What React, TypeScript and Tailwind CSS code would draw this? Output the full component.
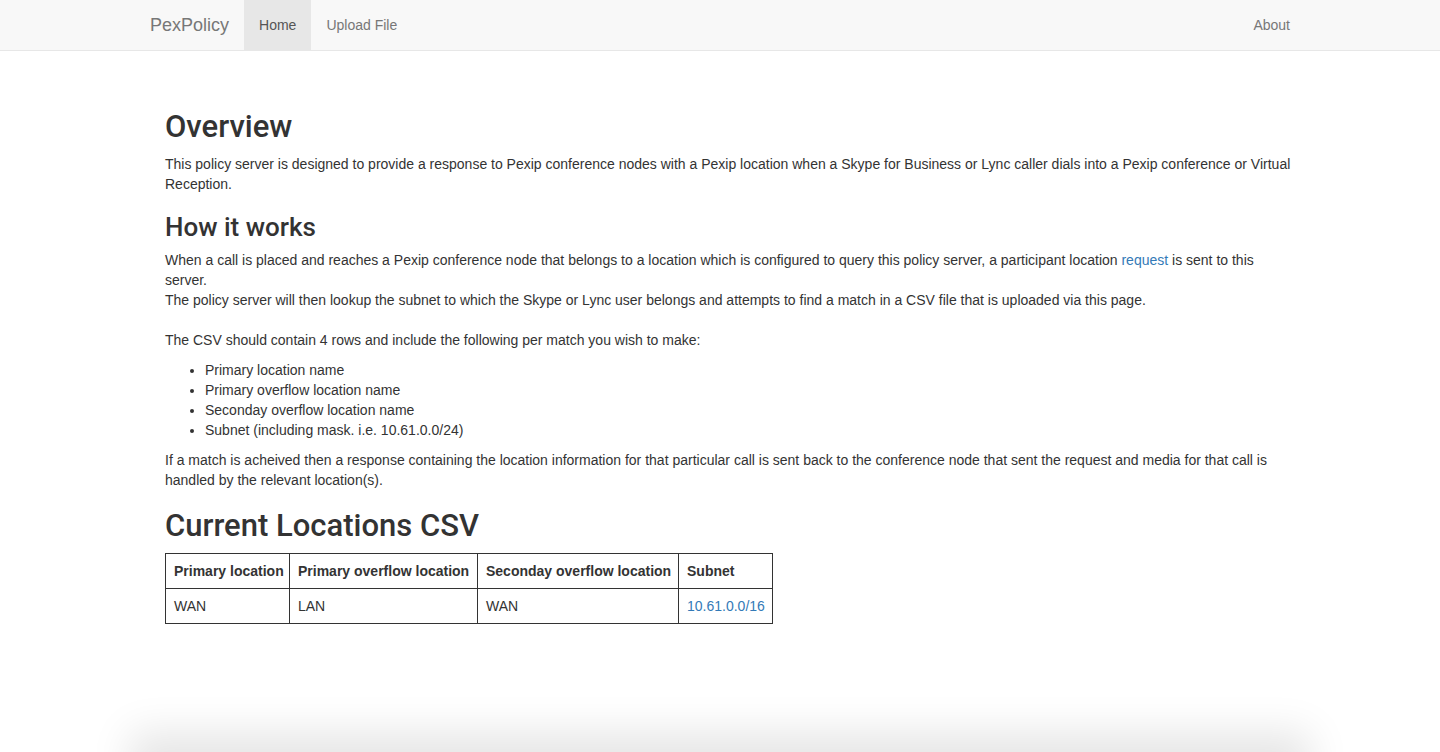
import React from "react";

const rows = [
  { primary: "WAN", overflow: "LAN", secondary: "WAN", subnet: "10.61.0.0/16" },
];

export default function App() {
  return (
    <div className="h-[752px] overflow-hidden flex flex-col bg-white text-[#333] font-['Liberation_Sans',Arial,sans-serif]">
      {/* Navbar */}
      <nav className="h-[51px] shrink-0 bg-[#f8f8f8] border-b border-[#e7e7e7]">
        <div className="w-[1170px] mx-auto px-[15px] flex h-[50px]">
          <a className="-ml-[15px] px-[15px] flex items-center text-[18px] text-[#777]">PexPolicy</a>
          <a className="px-[15px] flex items-center text-[14px] text-[#555] bg-[#e7e7e7]">Home</a>
          <a className="px-[15px] flex items-center text-[14px] text-[#777]">Upload File</a>
          <a className="ml-auto -mr-[15px] px-[15px] flex items-center text-[14px] text-[#777]">About</a>
        </div>
      </nav>

      {/* Content */}
      <main className="flex-1 w-[1130px] ml-[165px] text-[14px] leading-[20px]">
        <h1 className="mt-[56px] mb-[7px] text-[31px] leading-[40px] font-medium font-['Roboto',sans-serif]">Overview</h1>
        <p>
          This policy server is designed to provide a response to Pexip conference nodes with a Pexip location when a Skype for
          Business or Lync caller dials into a Pexip conference or Virtual Reception.
        </p>

        <h2 className="mt-[16px] mb-[6px] text-[26px] leading-[34px] font-medium font-['Roboto',sans-serif]">How it works</h2>
        <p>
          When a call is placed and reaches a Pexip conference node that belongs to a location which is configured to query this
          policy server, a participant location <a className="text-[#337ab7]">request</a> is sent to this server.
          <br />
          The policy server will then lookup the subnet to which the Skype or Lync user belongs and attempts to find a match in a
          CSV file that is uploaded via this page.
          <br />
          <br />
          The CSV should contain 4 rows and include the following per match you wish to make:
        </p>
        <ul className="list-disc pl-[40px] mt-[10px] mb-[10px]">
          <li>Primary location name</li>
          <li>Primary overflow location name</li>
          <li>Seconday overflow location name</li>
          <li>Subnet (including mask. i.e. 10.61.0.0/24)</li>
        </ul>
        <p>
          If a match is acheived then a response containing the location information for that particular call is sent back to the
          conference node that sent the request and media for that call is handled by the relevant location(s).
        </p>

        <h1 className="mt-[16px] mb-[7px] text-[31px] leading-[40px] font-medium font-['Roboto',sans-serif]">Current Locations CSV</h1>
        <table className="table-fixed w-[608px] border-collapse border border-[#333] whitespace-nowrap">
          <thead>
            <tr className="h-[35px]">
              <th className="w-[124px] border border-[#333] pl-[8px] pr-0 text-left font-bold">Primary location</th>
              <th className="w-[188px] border border-[#333] pl-[8px] pr-0 text-left font-bold">Primary overflow location</th>
              <th className="w-[201px] border border-[#333] pl-[8px] pr-0 text-left font-bold">Seconday overflow location</th>
              <th className="w-[94px] border border-[#333] pl-[8px] pr-0 text-left font-bold">Subnet</th>
            </tr>
          </thead>
          <tbody>
            {rows.map((r) => (
              <tr key={r.subnet} className="h-[35px]">
                <td className="border border-[#333] pl-[8px]">{r.primary}</td>
                <td className="border border-[#333] pl-[8px]">{r.overflow}</td>
                <td className="border border-[#333] pl-[8px]">{r.secondary}</td>
                <td className="border border-[#333] pl-[8px]">
                  <a className="text-[#337ab7]">{r.subnet}</a>
                </td>
              </tr>
            ))}
          </tbody>
        </table>
      </main>

      {/* window shadow peeking at the bottom */}
      <div className="shrink-0 h-[40px] -mb-[40px] mx-[150px] bg-[#e4e4e4] shadow-[0_0_40px_20px_rgba(0,0,0,0.1)]" />
    </div>
  );
}
